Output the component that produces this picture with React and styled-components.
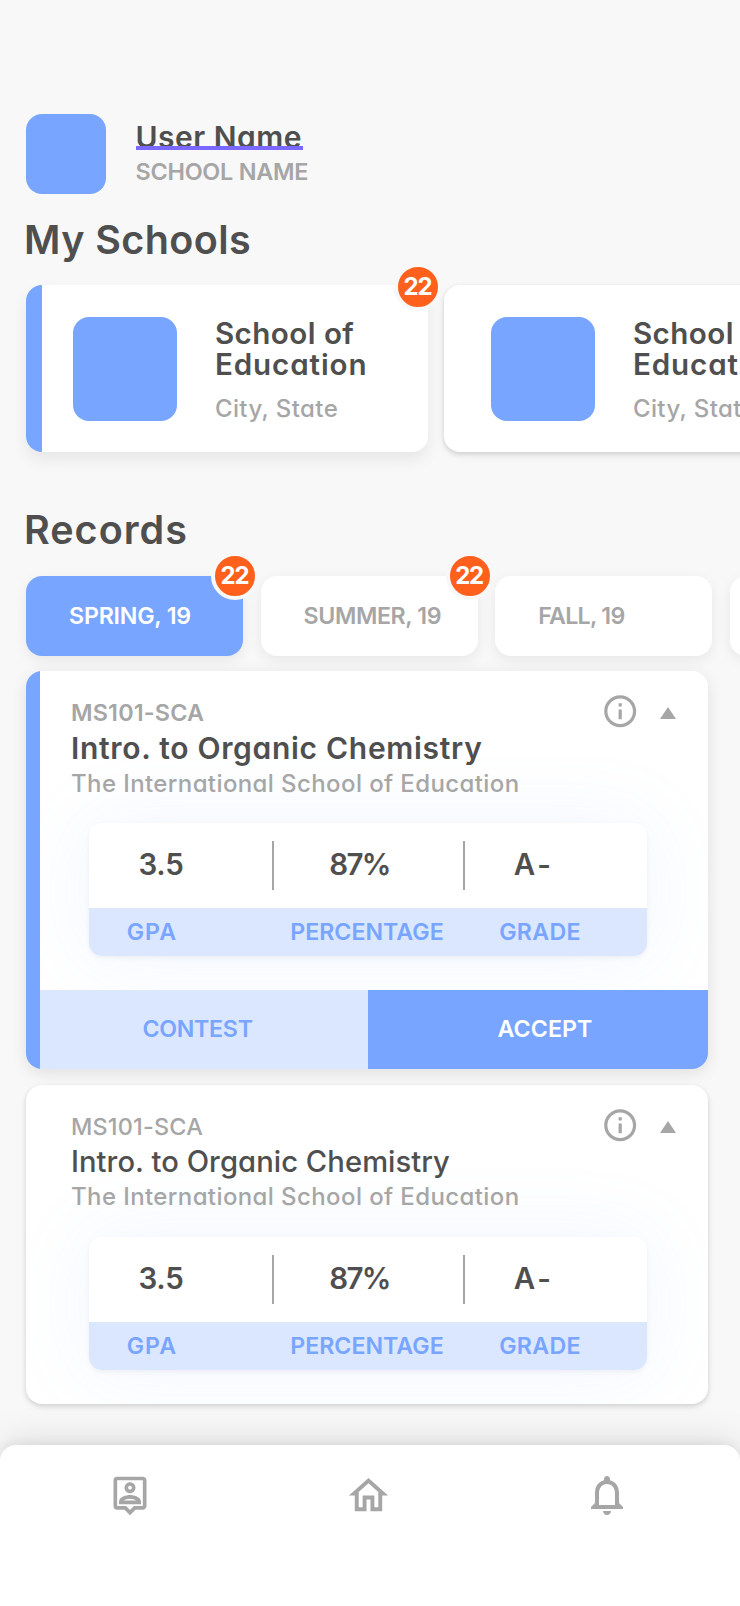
import React from 'react';
import styled, { createGlobalStyle } from 'styled-components';
import { MdInfoOutline, MdNotificationsNone, MdOutlineHome, MdOutlinePersonPin } from 'react-icons/md';

const c = {
  bg: '#f8f8f8',
  blue: '#78a5ff',
  pale: '#dbe7ff',
  ink: '#4f4f4f',
  gray: '#a6a6a6',
  orange: '#ff611d',
  purple: '#7b69ff',
};

const Global = createGlobalStyle`
  *, *::before, *::after { box-sizing: border-box; }
  body {
    margin: 0;
    background: ${c.bg};
    font-family: Inter, "Liberation Sans", sans-serif;
    font-feature-settings: "cv11";
    overflow: hidden;
  }
`;

const Screen = styled.div`
  height: 1606px;
  width: 740px;
  padding-top: 114px;
  display: flex;
  flex-direction: column;
  background: ${c.bg};
  overflow: hidden;
`;

const Text = styled.span`
  display: block;
  white-space: nowrap;
  font-size: ${p => p.$size}px;
  line-height: ${p => p.$line}px;
  font-weight: ${p => p.$weight || 500};
  letter-spacing: ${p => p.$track || 0}px;
  color: ${p => p.$color || c.gray};
`;

const Profile = styled.header`
  display: flex;
  gap: 29.5px;
  height: 80px;
  padding-left: 26px;
`;

const Tile = styled.div`
  flex: none;
  width: ${p => p.$size}px;
  height: ${p => p.$size}px;
  border-radius: 16px;
  background: ${c.blue};
`;

const ProfileText = styled.div`
  display: flex;
  flex-direction: column;
  align-items: flex-start;
  padding-top: 8px;
`;

const UserName = styled(Text)`
  position: relative;
  width: 167px;
  margin-bottom: 4px;

  &::after {
    content: '';
    position: absolute;
    left: 0;
    right: 0;
    top: 24px;
    height: 4px;
    background: ${c.purple};
  }
`;

const Heading = styled.h2`
  margin: ${p => p.$top}px 0 0 24px;
  font-size: 39.5px;
  line-height: 48px;
  font-weight: 600;
  letter-spacing: ${p => p.$track}px;
  color: ${c.ink};
`;

const Scroller = styled.div`
  display: flex;
  flex: none;
  gap: ${p => p.$gap}px;
  margin-top: ${p => p.$top}px;
  padding-left: 26px;
`;

const SchoolCard = styled.article`
  position: relative;
  flex: none;
  display: flex;
  width: 402px;
  height: 167px;
  padding: 32px 0 0 47.4px;
  border-radius: 16px;
  background: ${p => (p.$active ? `linear-gradient(to right, ${c.blue} 16px, #fff 16px)` : '#fff')};
  box-shadow: ${p => (p.$active ? '0 8px 16px rgba(0,0,0,.07)' : '0 2px 5px rgba(0,0,0,.15), 0 4px 12px rgba(0,0,0,.04)')};
`;

const SchoolText = styled.div`
  padding-left: 37.5px;
`;

const Badge = styled.span`
  position: absolute;
  top: ${p => p.$top}px;
  right: ${p => p.$right}px;
  width: 48px;
  height: 48px;
  border: 4px solid ${c.bg};
  border-radius: 50%;
  background: ${c.orange};
  color: #fff;
  font-size: 24px;
  line-height: 39px;
  font-weight: 650;
  letter-spacing: -1.2px;
  text-indent: -1px;
  text-align: center;
`;

const Tab = styled.button`
  position: relative;
  flex: none;
  width: 217px;
  height: 80px;
  padding: 0 0 0 43px;
  border: 0;
  border-radius: 16px;
  text-align: left;
  font-family: inherit;
  font-feature-settings: inherit;
  background: ${p => (p.$active ? c.blue : '#fff')};
  box-shadow: 0 4px 14px rgba(0,0,0,.07);
`;

const Records = styled.main`
  display: flex;
  flex-direction: column;
  gap: 15.5px;
  margin: 15.5px 32px 0 25.5px;
`;

const RecordCard = styled.article`
  padding-left: ${p => (p.$active ? 14 : 0)}px;
  border-radius: 16px;
  overflow: hidden;
  background: ${p => (p.$active ? `linear-gradient(to right, ${c.blue} 14px, #fff 14px)` : '#fff')};
  box-shadow: ${p => (p.$active ? '0 4px 16px rgba(0,0,0,.1)' : '0 2px 5px rgba(0,0,0,.15), 0 4px 12px rgba(0,0,0,.03)')};
`;

const RecordBody = styled.div`
  height: ${p => p.$height}px;
  padding: ${p => p.$top}px 0 0 ${p => (p.$active ? 31.5 : 45.5)}px;
  overflow: hidden;
`;

const RecordHead = styled.div`
  display: flex;
  justify-content: space-between;
  height: ${p => p.$height}px;
`;

const RecordActions = styled.div`
  display: flex;
  align-items: flex-start;
  gap: 20.5px;
  padding-right: 32px;
  color: ${c.gray};
`;

const InfoIcon = styled(MdInfoOutline)`
  display: block;
  margin-top: -5.5px;
`;

const Collapse = styled.span`
  margin-top: 9.5px;
  border: solid transparent;
  border-width: 0 8px 12.5px;
  border-bottom-color: ${c.gray};
`;

const Stats = styled.section`
  width: 557.5px;
  height: 133.5px;
  margin-left: 18.2px;
  border-radius: 13px;
  overflow: hidden;
  background: #fff;
  box-shadow: 0 2px 5px rgba(0,0,0,.05), 0 0 80px rgba(120,160,255,.11);
`;

const StatRow = styled.div`
  display: grid;
  grid-template-columns: 183px 191px 1fr;
  align-items: center;
  height: ${p => p.$height}px;
  background: ${p => p.$background};
`;

const Stat = styled.div`
  display: flex;
  justify-content: space-between;
  align-items: center;
  height: 49px;
  padding-left: ${p => p.$left}px;
  padding-bottom: ${p => p.$lift}px;
  border-left: ${p => (p.$line ? 2 : 0)}px solid ${c.gray};
`;

const Actions = styled.div`
  display: grid;
  grid-template-columns: 328.5px 1fr;
  height: 79.5px;
`;

const Action = styled.button`
  border: 0;
  padding: 0 0 0 ${p => p.$left}px;
  text-align: left;
  font-family: inherit;
  font-feature-settings: inherit;
  background: ${p => (p.$primary ? c.blue : c.pale)};
`;

const NavBar = styled.nav`
  display: flex;
  flex: none;
  justify-content: space-between;
  align-items: flex-start;
  height: 161px;
  margin-top: 41.5px;
  padding: 26px 109px 0 105.5px;
  border-radius: 16px 16px 0 0;
  background: #fff;
  color: ${c.gray};
  box-shadow: 0 -3px 10px rgba(0,0,0,.05), 0 -6px 36px rgba(0,0,0,.1);
`;

const NavIcon = styled.span`
  display: flex;
  justify-content: center;
  align-items: center;
  width: 48px;
  height: 48px;
`;

function School({ active, count }) {
  return (
    <SchoolCard $active={active}>
      <Tile $size={104} />
      <SchoolText>
        <Text $size={29.6} $line={32} $weight={600} $track={0.45} $color={c.ink}>School of</Text>
        <Text $size={29.6} $line={31.5} $weight={600} $track={0.9} $color={c.ink}>Education</Text>
        <Text $size={24} $line={56} $weight={550} $track={0.4}>City, State</Text>
      </SchoolText>
      {count && <Badge $top={-22} $right={-14}>{count}</Badge>}
    </SchoolCard>
  );
}

function Term({ label, track, active, count }) {
  return (
    <Tab $active={active}>
      <Text $size={23.2} $line={78} $weight={600} $track={track} $color={active ? '#fff' : c.gray}>{label}</Text>
      {count && <Badge $top={-24} $right={-16}>{count}</Badge>}
    </Tab>
  );
}

function StatLabel({ left, track, children }) {
  return (
    <Stat $left={left} $lift={1}>
      <Text $size={23.2} $line={30} $weight={600} $track={track} $color={c.blue}>{children}</Text>
    </Stat>
  );
}

function StatValue({ left, track, line, children }) {
  return (
    <Stat $left={left} $lift={2} $line={line}>
      <Text $size={29.5} $line={40} $weight={600} $track={track} $color={c.ink}>{children}</Text>
    </Stat>
  );
}

function Record({ active }) {
  return (
    <RecordCard $active={active}>
      <RecordBody $active={active} $height={active ? 318.5 : 319} $top={active ? 26 : 26.5}>
        <RecordHead $height={125.5}>
          <div>
            <Text $size={23.4} $line={32} $weight={active ? 600 : 500} $track={active ? 0.15 : 0.2}>MS101-SCA</Text>
            <Text $size={active ? 30 : 29.2} $line={active ? 39 : 37.5} $weight={active ? 600 : 500} $track={active ? 0.7 : 0.05} $color={c.ink}>
              Intro. to Organic Chemistry
            </Text>
            <Text $size={24} $line={32.5} $weight={450} $track={0.4}>The International School of Education</Text>
          </div>
          <RecordActions>
            <InfoIcon size={38.4} />
            <Collapse />
          </RecordActions>
        </RecordHead>
        <Stats>
          <StatRow $height={85.5} $background="#fff">
            <StatValue left={49.3} track={-0.3}>3.5</StatValue>
            <StatValue left={55} track={-1.6} line>87%</StatValue>
            <StatValue left={48.5} track={3} line>A-</StatValue>
          </StatRow>
          <StatRow $height={48} $background={c.pale}>
            <StatLabel left={37.5} track={1}>GPA</StatLabel>
            <StatLabel left={18} track={0}>PERCENTAGE</StatLabel>
            <StatLabel left={36} track={0.3}>GRADE</StatLabel>
          </StatRow>
        </Stats>
      </RecordBody>
      {active && (
        <Actions>
          <Action $left={103}>
            <Text $size={23.2} $line={32} $weight={600} $track={-0.3} $color={c.blue}>CONTEST</Text>
          </Action>
          <Action $primary $left={129.5}>
            <Text $size={23.2} $line={32} $weight={600} $track={0.1} $color="#fff">ACCEPT</Text>
          </Action>
        </Actions>
      )}
    </RecordCard>
  );
}

export default function App() {
  return (
    <Screen>
      <Global />
      <Profile>
        <Tile $size={80} />
        <ProfileText>
          <UserName $size={30} $line={31} $weight={600} $track={0.5} $color={c.ink}>User Name</UserName>
          <Text $size={23.4} $line={30} $weight={600} $track={-0.25}>SCHOOL NAME</Text>
        </ProfileText>
      </Profile>

      <Heading $top={22} $track={0.4}>My Schools</Heading>
      <Scroller $gap={16} $top={21}>
        <School active count={22} />
        <School />
      </Scroller>

      <Heading $top={54} $track={1}>Records</Heading>
      <Scroller $gap={17.6} $top={21.6}>
        <Term active label="SPRING, 19" track={-0.2} count={22} />
        <Term label="SUMMER, 19" track={-0.4} count={22} />
        <Term label="FALL, 19" track={-0.7} />
        <Term label="" />
      </Scroller>

      <Records>
        <Record active />
        <Record />
      </Records>

      <NavBar>
        <NavIcon><MdOutlinePersonPin size={44} /></NavIcon>
        <NavIcon><MdOutlineHome size={47} /></NavIcon>
        <NavIcon><MdNotificationsNone size={48} /></NavIcon>
      </NavBar>
    </Screen>
  );
}
